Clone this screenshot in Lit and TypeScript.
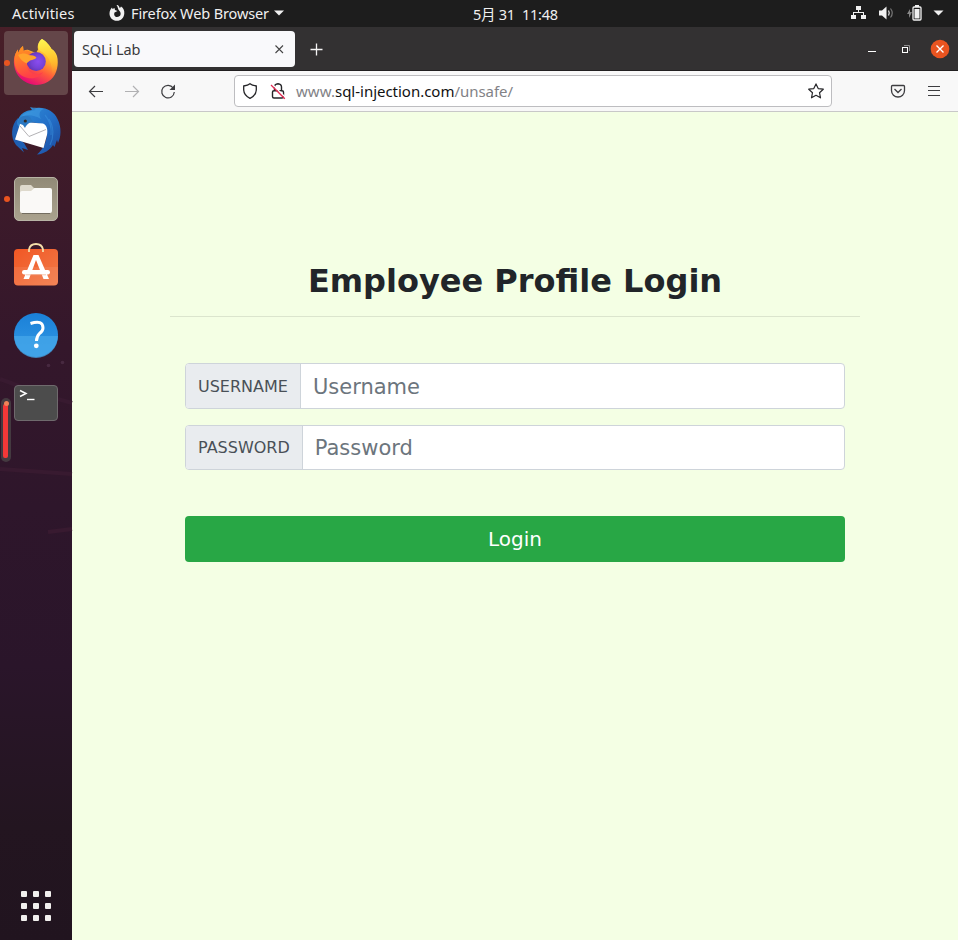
import { LitElement, html, css, svg } from "lit";
import { customElement, property } from "lit/decorators.js";

const firefox = svg`
  <defs>
    <linearGradient id="ffBody" x1="0.8" y1="0.05" x2="0.3" y2="1">
      <stop offset="0" stop-color="#fff44f"/><stop offset="0.35" stop-color="#ffb02b"/>
      <stop offset="0.62" stop-color="#ff5a3c"/><stop offset="1" stop-color="#e2007c"/>
    </linearGradient>
    <linearGradient id="ffTail" x1="0.5" y1="0" x2="0.6" y2="1">
      <stop offset="0" stop-color="#fff44f"/><stop offset="0.55" stop-color="#ffc52e"/><stop offset="1" stop-color="#ff9a2a" stop-opacity="0"/>
    </linearGradient>
    <radialGradient id="ffGlobe" cx="0.6" cy="0.5" r="0.7">
      <stop offset="0" stop-color="#8a4cf0"/><stop offset="0.5" stop-color="#7542d5"/><stop offset="1" stop-color="#5a2b9f"/>
    </radialGradient>
    <linearGradient id="ffHead" x1="0" y1="0" x2="0.3" y2="1">
      <stop offset="0" stop-color="#ff9a1e"/><stop offset="0.4" stop-color="#ff7a2b"/><stop offset="1" stop-color="#ff4048"/>
    </linearGradient>
  </defs>
  <path fill="url(#ffBody)" d="M30 0 C34 2 38 7 39.500 10 C42 11 44 14 45 17 C47 25 45 35 39 40.500 C33 46.500 22 47.500 14.500 43.500 C5 39 1 29 2 20 C2.500 16 4 13 6 10.500 L6 14 C8 10 9 8.500 11 7 L11.500 12 C13 11 15 10.500 16.500 11 L24 14 L26 10.500 C25 6 27 2 30 0Z"/>
  <path fill="url(#ffHead)" d="M6 10.500 L6 14 C8 10 9 8.500 11 7 L11.500 12 C13 11 15 11 17 12 L24 18 L15 24 C14 34 24 38 31 33 C27 41 12 42 5 32 C1 24 2 15 6 10.500Z"/>
  <path fill="url(#ffTail)" d="M30 0 C34 2 38 7 39.500 10 C46 15 47 29 40 37 C41 24 36 16 30 13 C24 10 26 3 30 0Z"/>
  <circle cx="24.200" cy="22.500" r="9.600" fill="url(#ffGlobe)"/>
  <path fill="#ffa42c" d="M6 16 C10 14 14 14 16.500 16 C20 16.300 22.500 16.500 24.500 18.500 C23 21 19 20.500 17.500 22 C16 23 15 24 14.600 24.500 C11 23 8 20 6 16Z"/>`;

const thunderbird = svg`
  <defs>
    <linearGradient id="tbBody" x1="0" y1="0" x2="1" y2="1">
      <stop offset="0" stop-color="#2f8fd8"/><stop offset="0.5" stop-color="#2470c8"/><stop offset="1" stop-color="#1c4a9e"/>
    </linearGradient>
  </defs>
  <path fill="#1f5fb2" d="M6 11 C-1 18 -2 30 4 38 L12 45.500 L10 41 L16 43 L12 36 L5 30 L9 17Z"/>
  <path fill="url(#tbBody)" d="M18 0 L22 1.500 C32 -1 42 4 45.500 12 C50 21 49 30 46 36 L45 33 L42.500 40 L41 38 C38 43 32 47 25 47.500 C31 42 35 36 35 24 C32 16 24 14 14 17 L10 21 C4 20 4 14 8 9 C11 5 15 3.500 20 3Z"/>
  <path fill="#48a5e6" d="M18 0 L24 3 C15 4 10 7 8 12 C13 7 20 7 29 12 C26 7 28 3 32 2 C27 0 22 1 18 0Z" opacity=".45"/>
  <path d="M37 12 C42 20 42 30 38 38 M33 8 C38 14 40 20 39 28" fill="none" stroke="#3c94df" stroke-width="1.200" opacity=".5"/>
  <path fill="#fff" d="M8 17 C9 15.500 12 15 17 15.500 L31 16.500 C35 18 36 23 35 28 L31.500 41 L3 32.500Z"/>
  <path d="M8 19 L17 29.500 L34 22.500" fill="none" stroke="#aaa9ad" stroke-width=".9"/>
  <path fill="#2b78c2" d="M6 16 C6 10 12 7 18 10 L21 15 C17 15.500 15 17 13 21 L11 18Z"/>
  <circle cx="13.300" cy="14" r="1.600" fill="#332a24"/>`;

const files = svg`
  <defs><linearGradient id="flBg" x1="0" y1="0" x2="0" y2="1"><stop offset="0" stop-color="#918a77"/><stop offset="1" stop-color="#aaa28e"/></linearGradient></defs>
  <rect x="2.500" y="2.500" width="43" height="43" rx="4.500" fill="url(#flBg)" stroke="#b8b4a5"/>
  <path fill="#ded9cc" d="M8 18 V12 Q8 10 10 10 H19 L22 13 H24 V18Z"/>
  <path fill="#faf9f7" d="M8 18 Q8 16 10 16 H19 L22.500 13 H38 Q40 13 40 15 V36 Q40 38 38 38 H10 Q8 38 8 36Z"/>
  <path d="M10 38.500 H38" stroke="#736d60"/>`;

const software = svg`
  <defs><linearGradient id="swBg" x1="0" y1="0" x2="1" y2="1"><stop offset="0" stop-color="#f15724"/><stop offset="1" stop-color="#f17b49"/></linearGradient></defs>
  <rect x="2" y="6" width="44" height="36.500" rx="4" fill="url(#swBg)"/>
  <path d="M2 24H46V38.500Q46 42.500 42 42.500H6Q2 42.500 2 38.500Z" fill="#fff" opacity=".08"/>
  <path d="M17 9 V6.500 Q18 1 24 1 Q30 1 31 6.500 V9" fill="none" stroke="#f3dfaa" stroke-width="1.800"/>
  <path d="M21.500 12 H26.500 L37 36 H31.500 L24 17 L17 36 H11.500Z" fill="#fff"/>
  <rect x="10" y="27" width="28" height="4.500" rx="2.200" fill="#fff"/>
  <path d="M14 31.800 H34" stroke="#ee9a76" stroke-width=".6"/>`;

const help = svg`
  <defs><linearGradient id="hpBg" x1="0" y1="0" x2="0" y2="1"><stop offset="0" stop-color="#1a80d8"/><stop offset="1" stop-color="#3399e4"/></linearGradient></defs>
  <circle cx="24" cy="24" r="22" fill="url(#hpBg)"/>
  <path d="M2 25 A22 22 0 0 0 46 25Z" fill="#45a7e9" opacity=".75"/>
  <path d="M18.500 12.500 Q31 8.500 31 17 Q31 20 27.500 22.500 Q24.500 25.500 24.500 30" fill="none" stroke="#fff" stroke-width="3"/>
  <circle cx="24.300" cy="34.800" r="2.400" fill="#fff"/>`;

const terminal = svg`
  <rect x="2.500" y="6.500" width="43" height="35" rx="3.500" fill="#4c4c4c" stroke="#6f6a6d"/>
  <path d="M8 11.500 L14 14.500 L8 17.500" fill="none" stroke="#fff" stroke-width="1.500"/>
  <path d="M15 20.500 H22.500" stroke="#fff" stroke-width="1.400"/>`;

@customElement("dock-item")
class DockItem extends LitElement {
  @property({ type: Boolean, reflect: true }) active = false;
  @property({ type: Boolean }) running = false;
  @property({ attribute: false }) art: unknown;
  static styles = css`
    :host { position: relative; display: flex; align-items: center; justify-content: center; height: 64px; border-radius: 4px; }
    :host([active]) { background: #644649; }
    svg { display: block; width: 48px; height: 48px; overflow: visible; }
    .dot { position: absolute; left: 0; top: 29px; width: 6px; height: 6px; border-radius: 50%; background: #e95420; }
  `;
  render() {
    return html`${this.running ? html`<span class="dot"></span>` : ""}
      <svg viewBox="0 0 48 48">${this.art}</svg>`;
  }
}

@customElement("login-page")
class LoginPage extends LitElement {
  static styles = css`
    :host { display: block; flex: 1; background: #f4ffe4; color: #212529; font: 16px/24px "DejaVu Sans", sans-serif; }
    .wrap { width: 690px; margin-left: 98px; padding-top: 149px; }
    h1 { margin: 0; height: 55px; font-size: 32px; line-height: 40px; text-align: center; border-bottom: 1px solid #dbe5cd; }
    form { display: block; padding: 46px 15px 0; }
    .group { display: flex; box-sizing: border-box; height: 46px; border: 1px solid #ced4da; border-radius: 4px; background: #fff; overflow: hidden; margin-bottom: 16px; }
    .group.second { height: 45px; margin-bottom: 46px; }
    .label { display: flex; align-items: center; padding: 1px 12px 0; background: #e9ecef; border-right: 1px solid #ced4da; color: #495057; }
    input { flex: 1; min-width: 0; border: 0; outline: 0; padding: 2px 12px 0; background: none; font: 21px "DejaVu Sans", sans-serif; }
    input::placeholder { color: #6c757d; opacity: 1; }
    .second .label, .second input { padding-top: 0; }
    button { display: block; width: 100%; height: 46px; border: 0; border-radius: 4px; padding: 0; background: #28a745; color: #fff; font: 20px "DejaVu Sans", sans-serif; }
  `;
  render() {
    return html`<div class="wrap">
      <h1>Employee Profile Login</h1>
      <form>
        <div class="group"><span class="label">USERNAME</span><input placeholder="Username"></div>
        <div class="group second"><span class="label">PASSWORD</span><input type="password" placeholder="Password"></div>
        <button type="button">Login</button>
      </form>
    </div>`;
  }
}

@customElement("app-root")
class AppRoot extends LitElement {
  static styles = css`
    :host { display: flex; flex-direction: column; width: 958px; height: 940px; overflow: hidden; font: 14.500px "Noto Sans", "Noto Sans CJK SC", sans-serif; }
    svg { display: block; flex: none; overflow: visible; }
    .top { flex: none; display: grid; grid-template-columns: 1fr auto 1fr; height: 27px; background: #1d1d1d; color: #f0f0f0; white-space: pre; }
    .left, .right, .clock { display: flex; align-items: center; }
    .left { padding: 0 0 2px 12px; }
    .activities { width: 97px; letter-spacing: .22px; }
    .left svg { margin-right: 6px; }
    .appname { width: 143px; letter-spacing: -.12px; }
    .clock { width: 85px; margin-left: 73px; letter-spacing: -.25px; }
    .right { justify-content: flex-end; padding: 0 15px 2px 0; }
    .right svg + svg { margin-left: 12px; }
    .right .net { margin-right: 1px; }
    .body { flex: 1; display: flex; min-height: 0; }
    .dock { position: relative; box-sizing: border-box; width: 72px; padding: 4px 4px 0; display: flex; flex-direction: column; gap: 4px; background: linear-gradient(#481f28 0, #421c28 70px, #3c1a2a 180px, #34172b 320px, #2e162b 480px, #2a152a 640px, #231520 800px, #21141f 100%); }
    .wall { position: absolute; left: 0; top: 323px; }
    .dock dock-item { z-index: 1; }
    .grip { position: absolute; z-index: 2; left: 1px; top: 371px; width: 10px; height: 64px; border-radius: 5px; background: #443a40; }
    .bar { width: 5px; height: 54px; margin: 6px 0 0 2px; border-radius: 2px; background: #f43838; }
    .knob { position: absolute; left: 3px; top: 3px; width: 5px; height: 5px; border-radius: 50%; background: #f08258; }
    .apps { display: grid; grid-template-columns: repeat(3, 6px); gap: 6px; position: absolute; left: 21px; bottom: 19px; }
    .apps i { width: 6px; height: 6px; border-radius: 1px; background: #f2f0ee; }
    .window { flex: 1; display: flex; flex-direction: column; }
    .tabs { box-sizing: border-box; height: 44px; padding: 4px 8px 0 2px; display: flex; background: #333132; border-bottom: 1px solid #211f20; }
    .tab { box-sizing: border-box; width: 221px; height: 36px; border-radius: 4px; background: #f9f9fb; color: #3b3a3d; display: flex; align-items: center; justify-content: space-between; padding: 0 11px 0 8px; letter-spacing: -.1px; }
    .plus { margin: 12px auto 0 15px; }
    .controls { display: flex; align-items: center; height: 36px; }
    .tools { box-sizing: border-box; height: 41px; border-bottom: 1px solid #c8c8c8; background: #f8f8f8; display: flex; align-items: center; padding: 0 16px; }
    .tools > svg + svg { margin-left: 20px; }
    .url { box-sizing: border-box; width: 598px; height: 32px; margin: 0 58px 0 58px; border: 1px solid #bdbdc0; border-radius: 4px; background: #fff; display: flex; align-items: center; padding: 0 7px; color: #828286; }
    .address { flex: 1; margin-left: 10px; font-size: 15px; white-space: nowrap; }
    .pre { letter-spacing: .05px; } .post { letter-spacing: -.05px; }
    .host { color: #111; letter-spacing: -.02px; }
    .url svg + svg { margin-left: 12px; }
  `;
  render() {
    return html`
      <div class="top">
        <div class="left">
          <span class="activities">Activities</span>
          <svg width="16" height="16"><path fill="#f1f1f1" d="M7.500 0C10.500 0 10 2.500 11 3L12 1.500C14.500 3 15.500 5.500 15.300 8.500C15 13 12 15.800 8 15.800C3.500 15.800 .500 12.500 .500 8.500C.500 6 1.500 4 3 2.500L3.500 4L5.500 3L6 5L8.500 6L5.500 7.500C4.500 10 6 12 8 12C12 12 12.500 8 10.500 6C8.500 4 9 1.500 7.500 0Z"/></svg>
          <span class="appname">Firefox Web Browser</span>
          <svg width="10" height="6"><path fill="#f1f1f1" d="M0 .500H10L5 5.500Z"/></svg>
        </div>
        <div class="clock">5月 31  11:48</div>
        <div class="right">
          <svg class="net" width="15" height="14" fill="#f1f1f1"><path d="M5 0h5v4H8v2h5v3h2v4h-5V9h2V7H3v2h2v4H0V9h2V6h5V4H5z"/></svg>
          <svg width="16" height="14"><path fill="#f1f1f1" d="M0 4.500H3L7.500 .500V13.500L3 9.500H0Z"/><path d="M9.500 4.500Q11 7 9.500 9.500" fill="none" stroke="#ddd" stroke-width="1.300"/><path d="M11.500 2.500Q15 7 11.500 11.500" fill="none" stroke="#777" stroke-width="1.200"/></svg>
          <svg width="15" height="16"><path fill="#888" d="M3 4L0 9H2V13L5 7H3Z"/><path fill="#f1f1f1" d="M8 0h4v2H8z"/><rect x="6" y="2" width="8" height="13" rx="1" fill="none" stroke="#f1f1f1" stroke-width="1.300"/><path fill="#f1f1f1" d="M7.500 4h5v9.500h-5z"/></svg>
          <svg width="9" height="6"><path fill="#f1f1f1" d="M-.500 .500H9.500L4.500 5.500Z"/></svg>
        </div>
      </div>
      <div class="body">
        <div class="dock">
          <svg class="wall" width="72" height="200" fill="none"><path d="M0 29L30 40M58 49L72 53M0 119L72 124M48 182L72 179" stroke="#381a30" stroke-width="4"/><circle cx="48.500" cy="15.500" r="1.800" fill="#472940"/><circle cx="62.500" cy="12.500" r="1.800" fill="#472940"/></svg>
          <dock-item active running .art=${firefox}></dock-item>
          <dock-item .art=${thunderbird}></dock-item>
          <dock-item running .art=${files}></dock-item>
          <dock-item .art=${software}></dock-item>
          <dock-item .art=${help}></dock-item>
          <dock-item .art=${terminal}></dock-item>
          <div class="grip"><div class="bar"></div><div class="knob"></div></div>
          <div class="apps">${Array.from({ length: 9 }, () => html`<i></i>`)}</div>
        </div>
        <div class="window">
          <div class="tabs">
            <div class="tab"><span>SQLi Lab</span><svg width="9" height="9"><path d="M.500 .500L8 8M8 .500L.500 8" stroke="#444" stroke-width="1.100"/></svg></div>
            <svg class="plus" width="13" height="13"><path d="M6.500 .500V12.500M.500 6.500H12.500" stroke="#f4f4f4" stroke-width="1.300"/></svg>
            <div class="controls">
              <svg width="82" height="20" fill="none"><path d="M0 12.500H8" stroke="#fff"/><path d="M36 6.500H41.500V12" stroke="#918f90"/><rect x="34.500" y="8.500" width="5" height="5" stroke="#fff"/><circle cx="72" cy="10" r="9.300" fill="#e95420"/><path d="M68.500 6.500L75.500 13.500M75.500 6.500L68.500 13.500" stroke="#fff" stroke-width="1.400"/></svg>
            </div>
          </div>
          <div class="tools">
            <svg width="16" height="16"><path d="M15 8.500H1.500M7 3L1.500 8.500L7 14" fill="none" stroke="#3d3d40" stroke-width="1.200"/></svg>
            <svg width="16" height="16"><path d="M1 8.500H14.500M9 3L14.500 8.500L9 14" fill="none" stroke="#b1b1b3" stroke-width="1.200"/></svg>
            <svg width="16" height="16"><path d="M13.200 5A6.300 6.300 0 1 0 14.300 9" fill="none" stroke="#3d3d40" stroke-width="1.200"/><path fill="#3d3d40" d="M15 1.500V7H9.500Z"/></svg>
            <div class="url">
              <svg width="16" height="16"><path d="M8 .700Q10 2.300 14.300 3V7Q14 12.500 8 15.300Q2 12.500 1.700 7V3Q6 2.300 8 .700Z" fill="none" stroke="#252528" stroke-width="1.300"/></svg>
              <svg width="16" height="16" fill="none"><path d="M4.500 7V4Q4.500 1 8 .700Q11.500 1 11.500 4V7M4 7.700H12Q13.500 7.700 13.500 9V13.500Q13.500 15 12 15H4Q2.500 15 2.500 13.500V9Q2.500 7.700 4 7.700" stroke="#252528" stroke-width="1.400"/><path d="M2 1L15.500 14.500" stroke="#fff" stroke-width="1.500"/><path d="M1 2L14.800 15.800" stroke="#e22850" stroke-width="1.300"/></svg>
              <span class="address"><span class="pre">www.</span><span class="host">sql-injection.com</span><span class="post">/unsafe/</span></span>
              <svg width="16" height="16"><path d="M8 .900L10.200 5.600L15.300 6.200L11.500 9.700L12.500 14.800L8 12.300L3.500 14.800L4.500 9.700L.700 6.200L5.800 5.600Z" fill="none" stroke="#28282b" stroke-width="1.200" stroke-linejoin="round"/></svg>
            </div>
            <svg width="16" height="16" fill="none" stroke="#3d3d40" stroke-width="1.300"><path d="M2.500 2.500H13.500Q14.500 2.500 14.500 3.500V7.500C14.500 11.500 11.500 14 8 14C4.500 14 1.500 11.500 1.500 7.500V3.500Q1.500 2.500 2.500 2.500Z"/><path d="M4.500 6L8 9.500L11.500 6"/></svg>
            <svg width="16" height="16"><path d="M2 3.500H14M2 7.500H14M2 12.500H14" stroke="#3d3d40" stroke-width="1.200"/></svg>
          </div>
          <login-page></login-page>
        </div>
      </div>`;
  }
}
